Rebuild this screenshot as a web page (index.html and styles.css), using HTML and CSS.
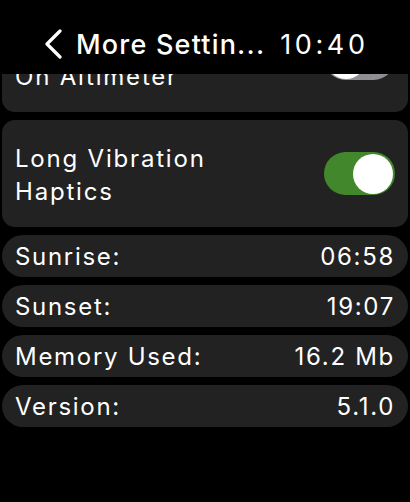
FILE: index.html
```html
<!DOCTYPE html>
<html lang="en">
<head>
    <meta charset="UTF-8">
    <meta name="viewport" content="width=device-width, initial-scale=1.0">
    <title>More Settings</title>
    <link rel="stylesheet" href="styles.css">
</head>
<body>
    <div class="watch">
        <header class="nav-bar">
            <svg class="back-icon" width="20" height="30" viewBox="0 0 20 30">
                <path d="M17 2 L4 15 L17 28" fill="none" stroke="#fff" stroke-width="3.2" stroke-linecap="round" stroke-linejoin="round"/>
            </svg>
            <span class="nav-title">More Settin...</span>
            <span class="nav-time">10:40</span>
        </header>

        <div class="scroll-view">
            <div class="settings-list">
                <div class="toggle-card">
                    <div class="toggle-label">Show Elevation<br>On Altimeter</div>
                    <div class="switch"><span class="knob"></span></div>
                </div>
                <div class="toggle-card">
                    <div class="toggle-label">Long Vibration<br>Haptics</div>
                    <div class="switch on"><span class="knob"></span></div>
                </div>
                <div class="info-row"><span>Sunrise:</span><span>06:58</span></div>
                <div class="info-row"><span>Sunset:</span><span>19:07</span></div>
                <div class="info-row"><span>Memory Used:</span><span>16.2 Mb</span></div>
                <div class="info-row"><span>Version:</span><span>5.1.0</span></div>
            </div>
        </div>
    </div>
</body>
</html>
```

FILE: styles.css
```css
body {
    margin: 0;
    background-color: #000;
    color: #fff;
    font-family: 'Inter', 'Open Sans', sans-serif;
}
.watch {
    width: 410px;
    height: 502px;
    overflow: hidden;
}
.nav-bar {
    height: 74px;
    display: flex;
    align-items: center;
    padding: 14px 0 0 43px;
    box-sizing: border-box;
    background: #000;
}
.back-icon {
    margin-right: 13px;
}
.nav-title {
    font-size: 27px;
    font-weight: 500;
    letter-spacing: 1.2px;
}
.nav-time {
    margin-left: 15px;
    font-size: 27px;
    font-weight: 400;
    letter-spacing: 3.6px;
}
.scroll-view {
    height: 428px;
    overflow: hidden;
}
.settings-list {
    margin-top: -69px;
    padding: 0 2px;
    display: flex;
    flex-direction: column;
}
.toggle-card {
    height: 107px;
    margin-bottom: 8px;
    padding: 0 13px;
    box-sizing: border-box;
    background: #222;
    border-radius: 13px;
    display: flex;
    align-items: center;
    justify-content: space-between;
}
.toggle-label {
    font-size: 24px;
    line-height: 33px;
    letter-spacing: 1.8px;
    padding-top: 2px;
}
.switch {
    width: 71px;
    height: 43px;
    border-radius: 22px;
    background: #8e8e93;
    display: flex;
    align-items: center;
    padding: 0 2px;
    box-sizing: border-box;
}
.switch.on {
    background: #43872c;
    justify-content: flex-end;
}
.knob {
    width: 40px;
    height: 40px;
    border-radius: 50%;
    background: #fff;
}
.info-row {
    height: 42px;
    margin-bottom: 8px;
    padding: 0 13px 0 13px;
    background: #222;
    border-radius: 21px;
    display: flex;
    align-items: center;
    justify-content: space-between;
    font-size: 24px;
    letter-spacing: 1.7px;
}
```
